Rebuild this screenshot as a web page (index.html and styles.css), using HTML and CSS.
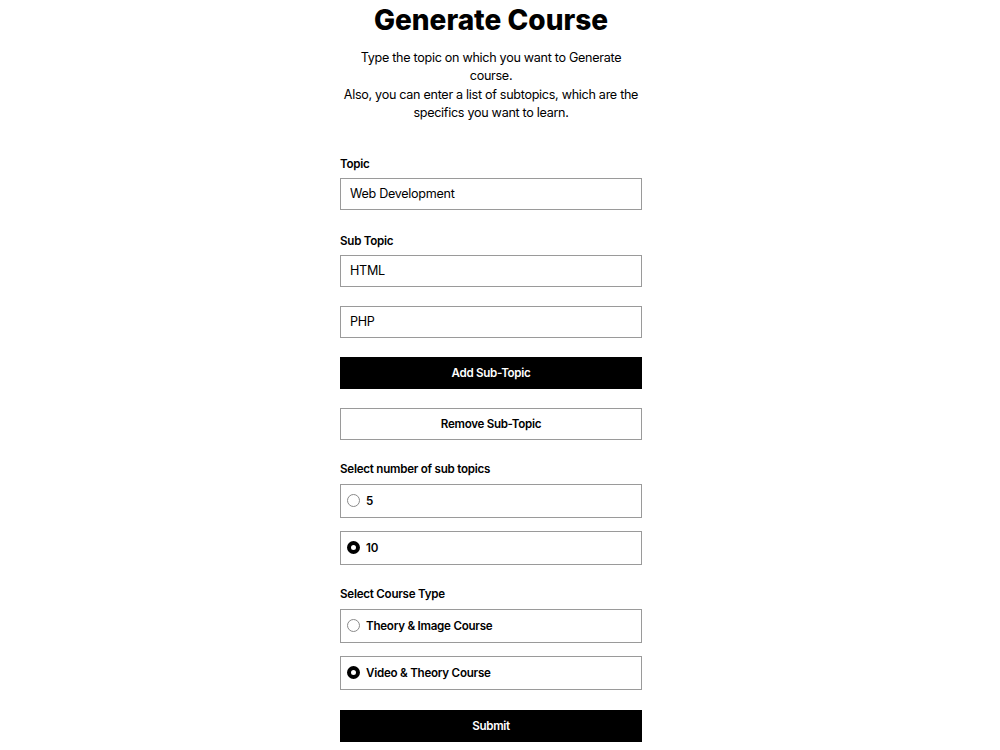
FILE: index.html
```html
<!DOCTYPE html>
<html lang="en">
<head>
    <meta charset="UTF-8">
    <title>Generate Course</title>
    <link rel="stylesheet" href="styles.css">
</head>
<body>
<div class="page">
    <div class="wrap">
        <h1 class="title">Generate Course</h1>
        <p class="intro">Type the topic on which you want to Generate course.<br>Also, you can enter a list of subtopics, which are the specifics you want to learn.</p>

        <form class="course-form" onsubmit="return false">
            <label class="label" for="topic">Topic</label>
            <input class="field" id="topic" type="text" value="Web Development">

            <label class="label gap-top" for="sub1">Sub Topic</label>
            <input class="field" id="sub1" type="text" value="HTML">
            <input class="field spaced" type="text" value="PHP">

            <button type="button" class="btn btn-dark spaced">Add Sub-Topic</button>
            <button type="button" class="btn btn-light spaced">Remove Sub-Topic</button>

            <div class="label group-title">Select number of sub topics</div>
            <label class="choice first">
                <input type="radio" name="count" value="5">
                <span>5</span>
            </label>
            <label class="choice">
                <input type="radio" name="count" value="10" checked>
                <span>10</span>
            </label>

            <div class="label group-title">Select Course Type</div>
            <label class="choice first">
                <input type="radio" name="type" value="image">
                <span>Theory &amp; Image Course</span>
            </label>
            <label class="choice">
                <input type="radio" name="type" value="video" checked>
                <span>Video &amp; Theory Course</span>
            </label>

            <button type="submit" class="btn btn-dark submit">Submit</button>
        </form>
    </div>
</div>
</body>
</html>
```

FILE: styles.css
```css
* {
    margin: 0;
    padding: 0;
    box-sizing: border-box;
}

body {
    background: #fff;
    color: #000;
    font-family: Inter, "Noto Sans", sans-serif;
}

.page {
    display: flex;
    justify-content: center;
    padding: 3px 18px 0 0;
}

.wrap {
    width: 302px;
}

.title {
    font-size: 28px;
    line-height: 34px;
    font-weight: 800;
    text-align: center;
    white-space: nowrap;
    margin: 0 -40px;
}

.intro {
    margin-top: 12px;
    font-size: 12.6px;
    line-height: 18.4px;
    letter-spacing: -0.3px;
    text-align: center;
}

.course-form {
    display: flex;
    flex-direction: column;
    margin-top: 33px;
}

.label {
    font-size: 11.6px;
    line-height: 15px;
    font-weight: 600;
    letter-spacing: -0.25px;
    padding-top: 1px;
    margin-bottom: 6px;
}

.label.gap-top {
    margin-top: 23px;
}

.label.group-title {
    margin-top: 21px;
}

.field {
    height: 32px;
    border: 1px solid #9a9a9a;
    padding: 0 9px;
    font-family: inherit;
    font-size: 12.6px;
    letter-spacing: -0.3px;
    color: #000;
    background: #fff;
    outline: none;
}

.spaced {
    margin-top: 19px;
}

.btn {
    height: 32px;
    font-family: inherit;
    font-size: 11.6px;
    font-weight: 600;
    letter-spacing: -0.3px;
    cursor: pointer;
}

.btn-dark {
    background: #000;
    color: #fff;
    border: 0;
}

.btn-light {
    background: #fff;
    color: #000;
    border: 1px solid #9a9a9a;
}

.submit {
    margin-top: 20px;
}

.choice {
    display: flex;
    align-items: center;
    gap: 6px;
    height: 34px;
    border: 1px solid #9a9a9a;
    padding: 0 6px;
    margin-top: 13px;
    font-size: 11.6px;
    font-weight: 600;
    letter-spacing: -0.25px;
    cursor: pointer;
}

.choice.first {
    margin-top: 1px;
}

.choice input {
    appearance: none;
    -webkit-appearance: none;
    width: 13px;
    height: 13px;
    border-radius: 50%;
    border: 1px solid #8a8a8a;
    background: #fff;
    flex: none;
}

.choice input:checked {
    border: 4px solid #000;
}
```
